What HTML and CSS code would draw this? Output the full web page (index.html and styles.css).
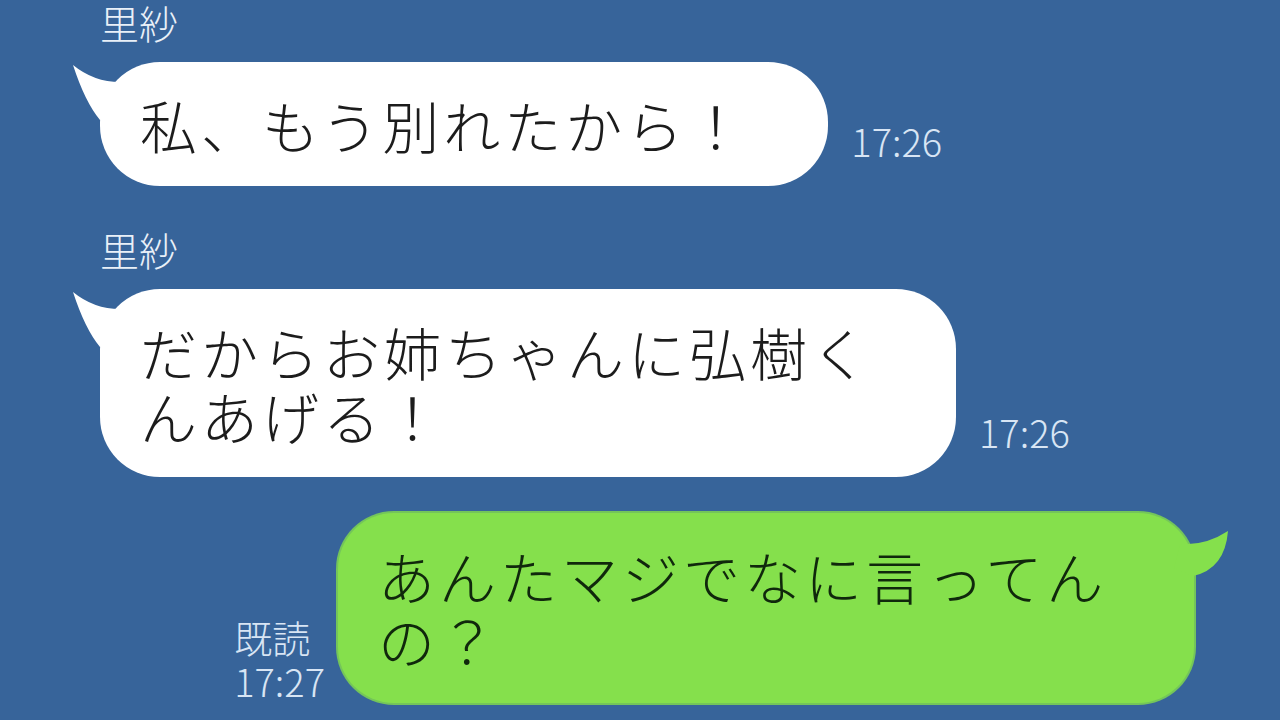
FILE: index.html
```html
<!DOCTYPE html>
<html lang="ja">
<head>
    <meta charset="UTF-8">
    <meta name="viewport" content="width=device-width, initial-scale=1.0">
    <title>トーク</title>
    <link rel="stylesheet" href="styles.css">
</head>
<body>
    <div class="chat">
        <div class="msg in">
            <div class="name">里紗</div>
            <div class="row">
                <div class="bubble white">
                    <svg class="tail" viewBox="0 0 70 70" width="70" height="70"><path d="M3 3 Q25 21 53 20 L70 45 L30 58 Q15 40 3 3 Z"/></svg>
                    <span class="text">私、もう別れたから！</span>
                </div>
                <div class="time">17:26</div>
            </div>
        </div>

        <div class="msg in">
            <div class="name">里紗</div>
            <div class="row">
                <div class="bubble white">
                    <svg class="tail" viewBox="0 0 70 70" width="70" height="70"><path d="M3 3 Q25 21 53 20 L70 45 L30 58 Q15 40 3 3 Z"/></svg>
                    <span class="text">だからお姉ちゃんに弘樹くんあげる！</span>
                </div>
                <div class="time">17:26</div>
            </div>
        </div>

        <div class="msg out">
            <div class="row">
                <div class="meta">
                    <div>既読</div>
                    <div>17:27</div>
                </div>
                <div class="bubble green">
                    <svg class="tail" viewBox="0 0 80 80" width="80" height="80"><path d="M74 18 Q51 33 26 31 L20 55 L39 63 Q71 56 74 18 Z"/></svg>
                    <span class="text">あんたマジでなに言ってんの？</span>
                </div>
            </div>
        </div>
    </div>
</body>
</html>
```

FILE: styles.css
```css
body {
    margin: 0;
    width: 1280px;
    height: 720px;
    overflow: hidden;
    background-color: #37649a;
    font-family: "Noto Sans CJK JP", "Noto Sans", sans-serif;
}
.chat {
    display: flex;
    flex-direction: column;
    padding: 2px 86px 0 100px;
}
.msg.in + .msg.in {
    margin-top: 43px;
}
.msg.out {
    margin-top: 36px;
}
.name {
    font-size: 39px;
    line-height: 40px;
    font-weight: 300;
    color: #e9f0f8;
    margin-bottom: 20px;
}
.row {
    display: flex;
    align-items: flex-end;
}
.msg.out .row {
    justify-content: flex-end;
}
.bubble {
    position: relative;
    box-sizing: border-box;
    max-width: 856px;
    padding: 30px 80px 30px 40px;
    border-radius: 60px;
    font-size: 57px;
    line-height: 64px;
    font-weight: 300;
    letter-spacing: 4px;
}
.white {
    background-color: #ffffff;
    color: #1c1c1c;
}
.green {
    background-color: #85e04c;
    color: #10280c;
    box-shadow: 0 0 0 2px #74c55a;
    border-radius: 56px;
    padding-bottom: 32px;
}
.text {
    position: relative;
}
.tail {
    position: absolute;
    top: 0;
}
.white .tail {
    left: -30px;
    fill: #ffffff;
}
.green .tail {
    right: -40px;
    fill: #85e04c;
}
.time {
    font-size: 38px;
    line-height: 40px;
    font-weight: 300;
    color: #d8e5f4;
    margin: 0 0 25px 23px;
}
.meta {
    font-size: 38px;
    line-height: 44px;
    font-weight: 300;
    color: #d8e5f4;
    margin: 0 13px 0 0;
}
```
